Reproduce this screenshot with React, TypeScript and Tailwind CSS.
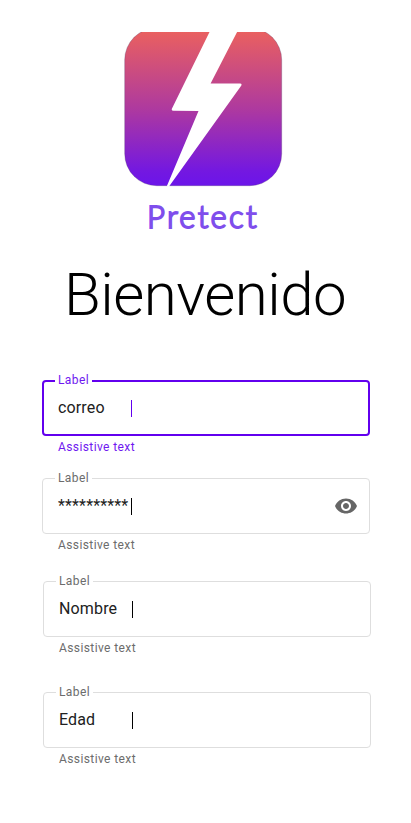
import React from "react";

type FieldProps = {
  value: string;
  focused?: boolean;
  password?: boolean;
  className?: string;
};

function Eye() {
  return (
    <svg className="mb-px h-6 w-6" viewBox="0 0 24 24" fill="#666666">
      <path d="M12 4.5C7 4.5 2.73 7.61 1 12c1.73 4.39 6 7.5 11 7.5s9.27-3.11 11-7.5c-1.73-4.39-6-7.5-11-7.5zM12 17c-2.76 0-5-2.24-5-5s2.24-5 5-5 5 2.24 5 5-2.24 5-5 5zm0-8c-1.66 0-3 1.34-3 3s1.34 3 3 3 3-1.34 3-3-1.34-3-3-3z" />
    </svg>
  );
}

function Field({ value, focused, password, className = "" }: FieldProps) {
  return (
    <div className={`w-[328px] ${className}`}>
      <div className="relative flex h-14 items-center pr-3 pl-4">
        <div
          className={`absolute inset-0 rounded-[4px] ${
            focused ? "border-2 border-[#6200ee]" : "border border-[#dedede]"
          }`}
        />
        <span
          className={`absolute -top-2 left-[13px] bg-white px-[3px] text-[12px] leading-4 tracking-[0.4px] ${
            focused ? "text-[#6f18f0]" : "text-[#6c6c6c]"
          }`}
        >
          Label
        </span>
        <span className="relative w-[73px] text-[16px] leading-6 tracking-[0.15px] whitespace-nowrap text-[#212121]">
          {value}
        </span>
        <span className={`relative h-[17px] w-px ${focused ? "bg-[#6200ee]" : "bg-black"}`} />
        {password && (
          <span className="relative ml-auto">
            <Eye />
          </span>
        )}
      </div>
      <p
        className={`mt-[3px] pl-4 text-[12px] leading-4 tracking-[0.4px] ${
          focused ? "text-[#6f18f0]" : "text-[#6c6c6c]"
        }`}
      >
        Assistive text
      </p>
    </div>
  );
}

function Logo() {
  return (
    <svg className="mt-8 ml-[124px] h-[155px] w-[159px]" viewBox="124 32 159 155">
      <defs>
        <linearGradient id="sunset" gradientUnits="userSpaceOnUse" x1="0" y1="32" x2="0" y2="186">
          <stop offset="0" stopColor="#e96060" />
          <stop offset="0.5" stopColor="#ae399f" />
          <stop offset="0.9" stopColor="#7418e0" />
          <stop offset="1" stopColor="#6b14ea" />
        </linearGradient>
      </defs>
      <rect x="124.7" y="28" width="157" height="157.7" rx="32" fill="url(#sunset)" stroke="#55406b" strokeOpacity="0.5" strokeWidth="0.6" />
      <path
        d="M210 31 L172 108.5 Q171 110.7 173.5 110.8 L198.5 111 L166.7 186.5 L169 186.5 L241 86 Q242.5 83.6 240 83.5 L210.6 83.5 L237.6 31 Z"
        fill="#fff"
      />
    </svg>
  );
}

export default function App() {
  return (
    <main className="flex h-[823px] w-[411px] flex-col overflow-hidden bg-white font-['Roboto',sans-serif]">
      <Logo />
      <p className="mt-[9px] ml-[147px] h-[42px] font-['Lato',sans-serif] text-[31px] leading-[40px] font-light tracking-[2.3px] whitespace-nowrap text-[#8250f2] [-webkit-text-stroke:1.8px_#7f4eec] [stroke-linejoin:round]">
        Pretect
      </p>
      <h1 className="mt-[21px] ml-[64px] h-[72px] text-[60px] leading-[72px] font-light tracking-[-0.5px] whitespace-nowrap text-black">
        Bienvenido
      </h1>
      <Field value="correo" focused className="mt-[49px] ml-[42px]" />
      <Field value="**********" password className="mt-[23px] ml-[42px]" />
      <Field value="Nombre" className="mt-[28px] ml-[43px]" />
      <Field value="Edad" className="mt-[36px] ml-[43px]" />
    </main>
  );
}
